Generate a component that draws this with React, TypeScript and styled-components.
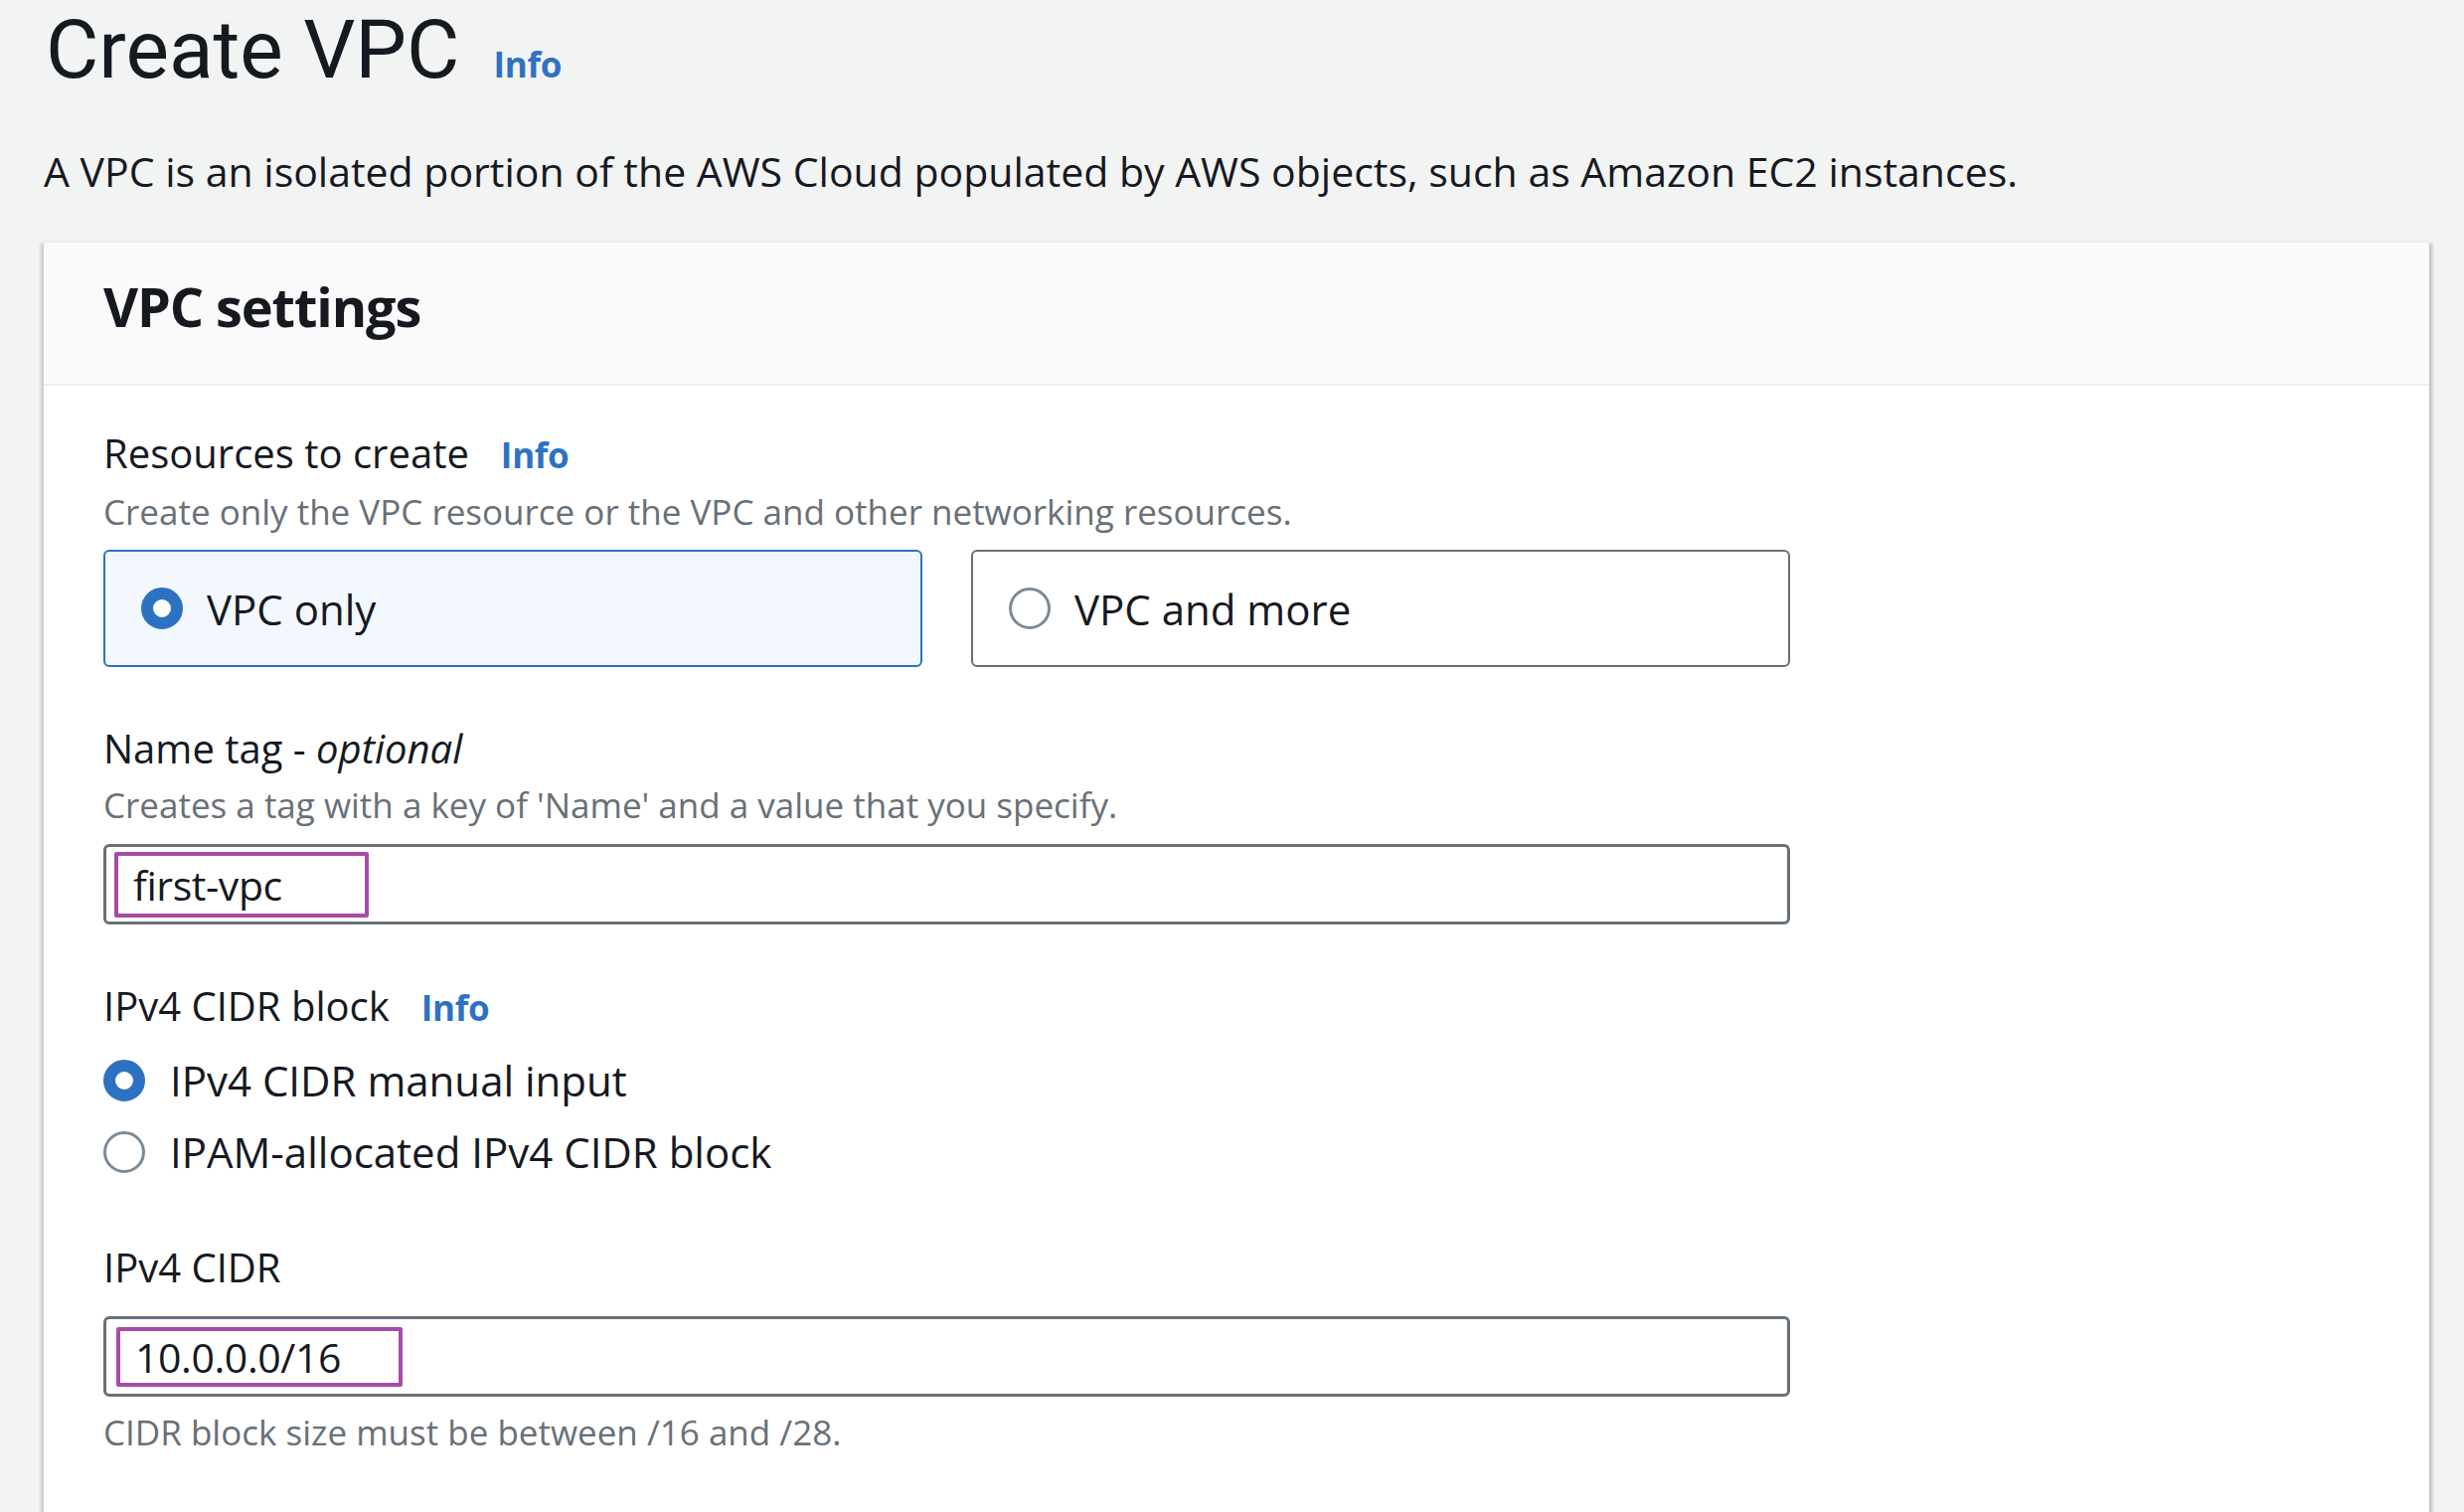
import React from "react";
import styled, { createGlobalStyle, css } from "styled-components";

const GlobalStyle = createGlobalStyle`
  html, body {
    margin: 0;
    padding: 0;
    background: #f2f3f3;
    overflow: hidden;
  }
  body {
    font-family: "Open Sans", "Noto Sans", sans-serif;
    color: #16191f;
  }
  * { box-sizing: border-box; }
`;

const Page = styled.main`
  padding: 0 35px 0 44px;
  height: 1521px;
  overflow: hidden;
`;

const TitleRow = styled.div`
  display: flex;
  align-items: baseline;
  gap: 34px;
  line-height: 100px;
`;

const Title = styled.h1`
  margin: 0;
  font-family: Roboto, "Open Sans", sans-serif;
  font-size: 82px;
  font-weight: 400;
  line-height: 100px;
  padding-left: 2px;
`;

const InfoLink = styled.a<{ $size?: number }>`
  color: #2d72c2;
  font-weight: 700;
  font-size: ${(p) => p.$size ?? 35}px;
  text-decoration: none;
  letter-spacing: -0.3px;
`;

const PageDescription = styled.p`
  margin: 29px 0 0 0;
  font-size: 41px;
  line-height: 57px;
`;

const Card = styled.section`
  margin-top: 41px;
  background: #ffffff;
  border-top: 2px solid #eaeded;
  box-shadow: 3px 3px 3px 0 rgba(0, 28, 36, 0.22), -3px 3px 3px 0 rgba(0, 28, 36, 0.18);
  min-height: 1400px;
`;

const CardHeader = styled.header`
  height: 144px;
  padding: 32px 60px 0 60px;
  background: #fafafa;
  border-bottom: 2px solid #eaeded;
`;

const CardTitle = styled.h2`
  margin: 0;
  font-size: 54px;
  font-weight: 700;
  letter-spacing: -1.1px;
  line-height: 65px;
`;

const CardBody = styled.div`
  padding: 40px 60px 100px 60px;
  display: flex;
  flex-direction: column;
  gap: 54px;
  width: 1817px;
`;

const Field = styled.div`
  display: flex;
  flex-direction: column;
`;

const Label = styled.div`
  display: flex;
  align-items: baseline;
  gap: 32px;
  font-size: 40px;
  line-height: 56px;
`;

const Optional = styled.em`
  font-style: italic;
`;

const Description = styled.div<{ $mt?: number }>`
  margin-top: ${(p) => p.$mt ?? 4}px;
  font-size: 35px;
  line-height: 49px;
  color: #687078;
`;

const TileGrid = styled.div`
  margin-top: 14px;
  display: grid;
  grid-template-columns: 1fr 1fr;
  gap: 49px;
`;

const Tile = styled.label<{ $selected?: boolean }>`
  height: 118px;
  display: flex;
  align-items: center;
  gap: 24px;
  padding-left: 36px;
  border-radius: 6px;
  border: 2px solid ${(p) => (p.$selected ? "#2d72c2" : "#687078")};
  background: ${(p) => (p.$selected ? "#f2f8fd" : "#ffffff")};
  font-size: 42px;
`;

const Radio = styled.span<{ $checked?: boolean }>`
  flex: none;
  width: 42px;
  height: 42px;
  border-radius: 50%;
  background: #ffffff;
  ${(p) =>
    p.$checked
      ? css`
          border: 12px solid #2d72c2;
        `
      : css`
          border: 3px solid #7d8998;
        `}
`;

const RadioGroup = styled.div`
  margin: 16px 0 5px 0;
  display: flex;
  flex-direction: column;
  gap: 14px;
`;

const RadioRow = styled.label`
  display: flex;
  align-items: center;
  gap: 25px;
  font-size: 42px;
  line-height: 58px;
`;

const InputBox = styled.div<{ $mt: number; $height: number }>`
  margin-top: ${(p) => p.$mt}px;
  height: ${(p) => p.$height}px;
  border: 3px solid #687078;
  border-radius: 6px;
  background: #ffffff;
  display: flex;
  align-items: center;
  padding-left: 5px;
`;

const Highlight = styled.span<{ $width: number; $height: number; $left: number }>`
  display: flex;
  align-items: center;
  width: ${(p) => p.$width}px;
  height: ${(p) => p.$height}px;
  margin-left: ${(p) => p.$left}px;
  padding-left: 15px;
  border: 4px solid #a64ca6;
  border-radius: 2px;
  font-size: 41px;
  letter-spacing: -0.4px;
  color: #16191f;
`;

export default function App() {
  return (
    <>
      <GlobalStyle />
      <Page>
        <TitleRow>
          <Title>Create VPC</Title>
          <InfoLink href="#">Info</InfoLink>
        </TitleRow>
        <PageDescription>
          A VPC is an isolated portion of the AWS Cloud populated by AWS objects, such as Amazon EC2 instances.
        </PageDescription>

        <Card>
          <CardHeader>
            <CardTitle>VPC settings</CardTitle>
          </CardHeader>
          <CardBody>
            <Field>
              <Label>
                <span>Resources to create</span>
                <InfoLink href="#">Info</InfoLink>
              </Label>
              <Description>Create only the VPC resource or the VPC and other networking resources.</Description>
              <TileGrid>
                <Tile $selected>
                  <Radio $checked />
                  <span>VPC only</span>
                </Tile>
                <Tile>
                  <Radio />
                  <span>VPC and more</span>
                </Tile>
              </TileGrid>
            </Field>

            <Field>
              <Label>
                <span>
                  Name tag - <Optional>optional</Optional>
                </span>
              </Label>
              <Description>Creates a tag with a key of 'Name' and a value that you specify.</Description>
              <InputBox $mt={15} $height={81}>
                <Highlight $width={256} $height={66} $left={3}>
                  first-vpc
                </Highlight>
              </InputBox>
            </Field>

            <Field>
              <Label>
                <span>IPv4 CIDR block</span>
                <InfoLink href="#">Info</InfoLink>
              </Label>
              <RadioGroup>
                <RadioRow>
                  <Radio $checked />
                  <span>IPv4 CIDR manual input</span>
                </RadioRow>
                <RadioRow>
                  <Radio />
                  <span>IPAM-allocated IPv4 CIDR block</span>
                </RadioRow>
              </RadioGroup>
            </Field>

            <Field>
              <Label>
                <span>IPv4 CIDR</span>
              </Label>
              <InputBox $mt={21} $height={81}>
                <Highlight $width={288} $height={60} $left={5}>
                  10.0.0.0/16
                </Highlight>
              </InputBox>
              <Description $mt={11}>CIDR block size must be between /16 and /28.</Description>
            </Field>
          </CardBody>
        </Card>
      </Page>
    </>
  );
}
